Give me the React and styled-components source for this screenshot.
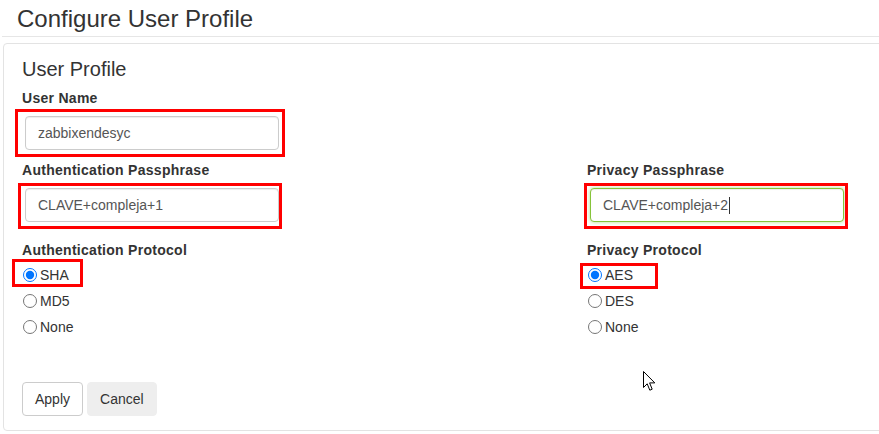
import React from "react";
import styled, { createGlobalStyle } from "styled-components";

/* 사용자 프로필 설정 화면 */

const GlobalStyle = createGlobalStyle`
  body {
    margin: 0;
    background: #fff;
    color: #333;
    font-family: "Liberation Sans", Arial, Helvetica, sans-serif;
    font-size: 14px;
    overflow: hidden;
  }
`;

const Page = styled.div`
  position: relative;
`;

const Header = styled.div`
  height: 37px;
  margin-left: 2px;
  padding: 6px 0 0 15px;
  box-sizing: border-box;
  border-bottom: 1px solid #e6e6e6;
  h1 {
    margin: 0;
    font-size: 24px;
    line-height: 26px;
    font-weight: normal;
    color: #333;
  }
`;

const Panel = styled.div`
  margin: 6px -10px 0 3px;
  padding: 14px 18px 14px;
  border: 1px solid #e3e3e3;
  border-radius: 4px;
  h3 {
    margin: 0 0 8px;
    font-size: 20px;
    line-height: 22px;
    font-weight: normal;
  }
`;

const Columns = styled.div`
  display: grid;
  grid-template-columns: 565px 1fr;
`;

const FormGroup = styled.div`
  margin-bottom: ${(p) => p.$gap || 0}px;
`;

const Label = styled.label`
  display: block;
  font-weight: bold;
  line-height: 20px;
  letter-spacing: 0.28px;
  margin-bottom: ${(p) => (p.$tight ? 2 : 8)}px;
`;

const InputWrap = styled.div`
  position: relative;
  width: 254px;
  margin-left: 3px;
`;

const TextBox = styled.div`
  height: 34px;
  box-sizing: border-box;
  padding: 6px 12px;
  line-height: 20px;
  color: #555;
  background: #fff;
  border: 1px solid ${(p) => (p.$focused ? "#86c33a" : "#ccc")};
  border-radius: 4px;
  box-shadow: inset 0 1px 1px rgba(0, 0, 0, 0.075)
    ${(p) => (p.$focused ? ", 0 0 4px rgba(134, 195, 58, 0.6)" : "")};
  white-space: nowrap;
`;

const Caret = styled.span`
  display: inline-block;
  width: 1px;
  height: 17px;
  margin-left: 1px;
  background: #333;
  vertical-align: -4px;
`;

/* 빨간 강조 표시 (스크린샷 위 주석) */
const Highlight = styled.span`
  position: absolute;
  top: ${(p) => p.$top}px;
  left: ${(p) => p.$left}px;
  width: ${(p) => p.$w}px;
  height: ${(p) => p.$h}px;
  box-sizing: border-box;
  border: 3px solid #ff0000;
  pointer-events: none;
`;

const RadioRow = styled.label`
  position: relative;
  display: flex;
  align-items: center;
  gap: 3px;
  height: 26px;
  padding-left: 1px;
  input {
    margin: 0;
    width: 14px;
    height: 14px;
  }
`;

const Actions = styled.div`
  display: flex;
  gap: 4px;
  margin-top: 42px;
`;

const Button = styled.button`
  height: 34px;
  padding: 6px 12px;
  font: inherit;
  font-size: 14px;
  line-height: 20px;
  color: #333;
  border-radius: 4px;
  border: 1px solid ${(p) => (p.$plain ? "#eee" : "#ccc")};
  background: ${(p) => (p.$plain ? "#eee" : "#fff")};
`;

const Pointer = styled.svg`
  position: absolute;
  left: 643px;
  top: 371px;
`;

const RadioGroup = ({ name, options, mark }) => (
    <div>
        {options.map((opt, i) => (
            <RadioRow key={opt}>
                <input type="radio" name={name} defaultChecked={i === 0} />
                {opt}
                {i === 0 && <Highlight {...mark} />}
            </RadioRow>
        ))}
    </div>
);

const App = () => {
    return (
        <Page>
            <GlobalStyle />
            <Header>
                <h1>Configure User Profile</h1>
            </Header>
            <Panel>
                <h3>User Profile</h3>
                <FormGroup $gap={10}>
                    <Label>User Name</Label>
                    <InputWrap>
                        <TextBox>zabbixendesyc</TextBox>
                        <Highlight $top={-7} $left={-10} $w={270} $h={48} />
                    </InputWrap>
                </FormGroup>
                <Columns>
                    <div>
                        <FormGroup $gap={18}>
                            <Label>Authentication Passphrase</Label>
                            <InputWrap>
                                <TextBox>CLAVE+compleja+1</TextBox>
                                <Highlight $top={-5} $left={-7} $w={264} $h={46} />
                            </InputWrap>
                        </FormGroup>
                        <FormGroup>
                            <Label $tight>Authentication Protocol</Label>
                            <RadioGroup
                              name="auth"
                              options={["SHA", "MD5", "None"]}
                              mark={{ $top: -3, $left: -10, $w: 71, $h: 28 }}
                            />
                        </FormGroup>
                    </div>
                    <div>
                        <FormGroup $gap={18}>
                            <Label>Privacy Passphrase</Label>
                            <InputWrap>
                                <TextBox $focused>
                                    CLAVE+compleja+2
                                    <Caret />
                                </TextBox>
                                <Highlight $top={-5} $left={-6} $w={264} $h={46} />
                            </InputWrap>
                        </FormGroup>
                        <FormGroup>
                            <Label $tight>Privacy Protocol</Label>
                            <RadioGroup
                              name="priv"
                              options={["AES", "DES", "None"]}
                              mark={{ $top: 1, $left: -7, $w: 78, $h: 26 }}
                            />
                        </FormGroup>
                    </div>
                </Columns>
                <Actions>
                    <Button>Apply</Button>
                    <Button $plain>Cancel</Button>
                </Actions>
            </Panel>
            <Pointer width="13" height="21" viewBox="0 0 13 21">
                <path
                  d="M0.5 0.5 L0.5 16.5 L4.2 12.8 L6.8 19.2 L9.2 18.2 L6.6 11.9 L11.8 11.9 Z"
                  fill="#fff"
                  stroke="#000"
                  strokeWidth="1"
                  strokeLinejoin="miter"
                />
            </Pointer>
        </Page>
    );
};

export default App;
